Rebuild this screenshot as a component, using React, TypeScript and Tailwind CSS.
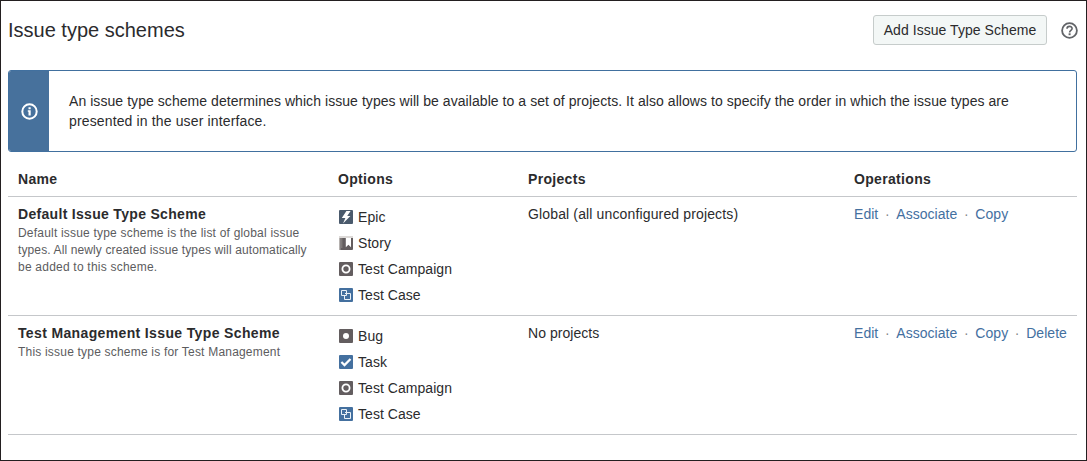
import React from "react";

type IconKind = "epic" | "story" | "campaign" | "case" | "bug" | "task";

function TypeIcon({ kind }: { kind: IconKind }) {
  const blue = kind === "case" || kind === "task";
  return (
    <svg className="h-3.5 w-3.5 shrink-0" viewBox="0 0 14 14" fill="none">
      <rect width="14" height="14" rx="1" fill={blue ? "#44709f" : kind === "epic" ? "#4a5a6c" : "#635d5f"} />
      {kind === "epic" && <path d="M7.4 1 2.8 8h3.6L4 13.4 11.4 6H8.2L11.6 1Z" fill="#fff" />}
      {kind === "story" && (
        <>
          <path d="M0 0h14v2H0Z" fill="#dddad8" />
          <path d="M6.8 2H12v9.2L9.4 8.8 6.8 11.2Z" fill="#fff" />
          <path d="M.7 2v12" stroke="#b5b1af" strokeWidth="1.4" />
          <path d="M2.8 2v10" stroke="#8a8684" />
        </>
      )}
      {kind === "campaign" && <circle cx="7" cy="7" r="3.6" stroke="#fff" strokeWidth="1.8" />}
      {kind === "case" && (
        <>
          <path d="M2.5 2.5h5v5h-5Z" stroke="#e9f0f6" />
          <path d="M6 5.5h5.5v6H5.5v-4" stroke="#e9f0f6" />
        </>
      )}
      {kind === "bug" && <circle cx="7" cy="7" r="3" fill="#fff" />}
      {kind === "task" && <path d="m2.4 7 3.1 3.1 6-6.2" stroke="#fff" strokeWidth="2.2" />}
    </svg>
  );
}

interface Scheme {
  name: string;
  nameSpacing: string;
  description: { text: string; spacing: string }[];
  options: [IconKind, string][];
  projects: string;
  operations: string[];
}

const schemes: Scheme[] = [
  {
    name: "Default Issue Type Scheme",
    nameSpacing: "tracking-[0.31px]",
    description: [
      { text: "Default issue type scheme is the list of global issue", spacing: "tracking-[0.2px]" },
      { text: "types. All newly created issue types will automatically", spacing: "tracking-[0.12px]" },
      { text: "be added to this scheme.", spacing: "tracking-[0.22px]" },
    ],
    options: [
      ["epic", "Epic"],
      ["story", "Story"],
      ["campaign", "Test Campaign"],
      ["case", "Test Case"],
    ],
    projects: "Global (all unconfigured projects)",
    operations: ["Edit", "Associate", "Copy"],
  },
  {
    name: "Test Management Issue Type Scheme",
    nameSpacing: "tracking-[0.36px]",
    description: [{ text: "This issue type scheme is for Test Management", spacing: "tracking-[0.2px]" }],
    options: [
      ["bug", "Bug"],
      ["task", "Task"],
      ["campaign", "Test Campaign"],
      ["case", "Test Case"],
    ],
    projects: "No projects",
    operations: ["Edit", "Associate", "Copy", "Delete"],
  },
];

const columns = "grid grid-cols-[320px_190px_326px_1fr] border-b border-[#c5c7ca] pl-2.5";

export default function App() {
  return (
    <main className="h-[461px] w-[1087px] border border-[#231f20] bg-white pl-[7px] pr-[9px] font-['Liberation_Sans',Arial,sans-serif] text-sm leading-5 text-[#2b2b2d]">
      <header className="flex h-[69px] items-start pt-3.5">
        <h1 className="text-[20px] leading-[30px]">Issue type schemes</h1>
        <button className="ml-auto h-[30px] w-[174px] whitespace-nowrap rounded-[3px] border border-[#c6cccb] bg-[#f3f7f6] tracking-[0.05px]">
          Add Issue Type Scheme
        </button>
        <svg className="-mr-px ml-3.5 mt-[7px] h-[17px] w-[17px]" viewBox="0 0 17 17" fill="none">
          <circle cx="8.5" cy="8.5" r="7.4" stroke="#626468" strokeWidth="1.8" />
          <path d="M6 6.8c0-3.2 5.1-3.2 5.1-.3 0 1.8-2.5 1.8-2.5 3.9" stroke="#626468" strokeWidth="1.6" />
          <path d="M7.6 11.3h2v1.9h-2Z" fill="#626468" />
        </svg>
      </header>

      <section className="flex h-[82px] overflow-hidden rounded-[3px] border border-[#41709f]">
        <div className="flex w-10 shrink-0 items-center justify-center bg-[#47719c]">
          <svg className="h-[17px] w-[17px]" viewBox="0 0 17 17" fill="none">
            <circle cx="8.5" cy="8.5" r="7.2" stroke="#fff" strokeWidth="2" />
            <path d="M7.5 4.2h2.2v2H7.5ZM6.8 7.2h2.9v5.2H7.5V8.8h-.7Z" fill="#fff" />
          </svg>
        </div>
        <p className="whitespace-nowrap pl-5 pt-5">
          <span className="tracking-[0.06px]">
            An issue type scheme determines which issue types will be available to a set of projects. It also allows to
            specify the order in which the issue types are
          </span>
          <br />
          <span className="tracking-[0.14px]">presented in the user interface.</span>
        </p>
      </section>

      <div className={`${columns} h-[45px] pt-[17px] font-bold tracking-[0.32px]`}>
        <span>Name</span>
        <span>Options</span>
        <span>Projects</span>
        <span>Operations</span>
      </div>

      {schemes.map((scheme) => (
        <div key={scheme.name} className={`${columns} h-[119px] pt-[7px]`}>
          <div className="whitespace-nowrap">
            <h2 className={`font-bold ${scheme.nameSpacing}`}>{scheme.name}</h2>
            <p className="pt-px text-xs leading-[17px] text-[#5c5c5e]">
              {scheme.description.map((line) => (
                <span key={line.text} className={`block ${line.spacing}`}>
                  {line.text}
                </span>
              ))}
            </p>
          </div>
          <ul className="flex flex-col gap-1.5 pt-[3px]">
            {scheme.options.map(([kind, label]) => (
              <li key={label} className="flex items-center gap-[5px] pl-px tracking-[0.05px]">
                <TypeIcon kind={kind} />
                {label}
              </li>
            ))}
          </ul>
          <span className={scheme.projects.length > 20 ? "tracking-[0.14px]" : "tracking-[0.04px]"}>
            {scheme.projects}
          </span>
          <div className="flex whitespace-nowrap tracking-[0.04px] text-[#44709f]">
            {scheme.operations.map((operation, index) => (
              <React.Fragment key={operation}>
                {index > 0 && <span className="w-[18px] text-center text-[#85878a]">·</span>}
                <a>{operation}</a>
              </React.Fragment>
            ))}
          </div>
        </div>
      ))}
    </main>
  );
}
